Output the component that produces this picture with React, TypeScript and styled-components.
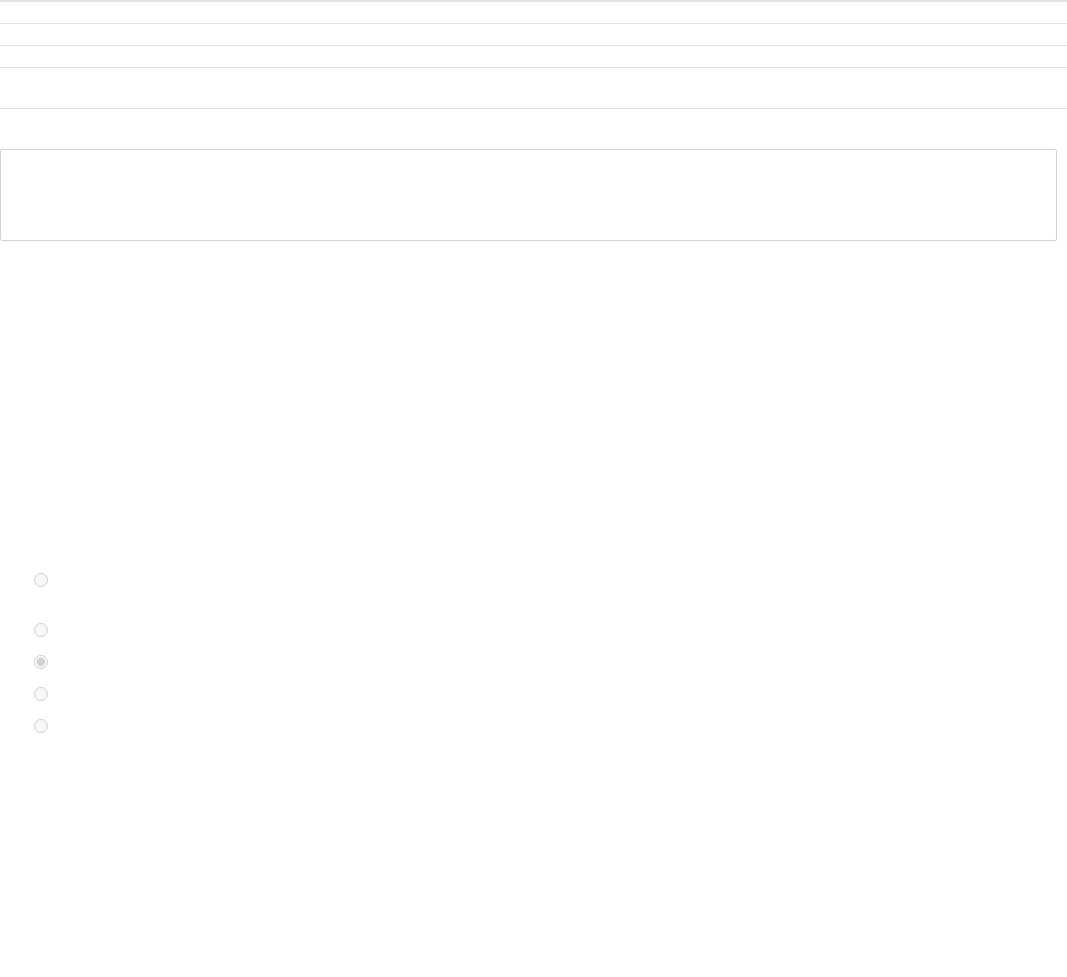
import { createGlobalStyle } from "styled-components";
import styled from "styled-components";

const GlobalStyle = createGlobalStyle`
  html, body {
    margin: 0;
    padding: 0;
    background: #ffffff;
    font-family: "Liberation Sans", Arial, sans-serif;
    font-size: 14px;
    color: #212529;
  }
`;

const Page = styled.div`
  display: flex;
  flex-direction: column;
  min-height: 977px;
`;

const Table = styled.table`
  width: 100%;
  border-collapse: collapse;
  border-top: 2px solid #dee2e6;
`;

const Row = styled.tr<{ tall?: boolean }>`
  height: ${({ tall }) => (tall ? 41 : 22)}px;
  border-bottom: 1px solid #dee2e6;
`;

const Cell = styled.td`
  padding: 0;
`;

const Notes = styled.div`
  margin: 40px 10px 0 0;
  height: 90px;
  border: 1px solid #ced4da;
  border-radius: 2px;
  background: #ffffff;
`;

const OptionList = styled.div`
  display: flex;
  flex-direction: column;
  margin: 332px 0 0 29px;
`;

const Option = styled.label<{ gap: number }>`
  display: flex;
  align-items: flex-start;
  height: ${({ gap }) => gap}px;
`;

const Radio = styled.input`
  width: 14px;
  height: 14px;
  margin: 0 0 0 5px;
`;

const options = [
  { gap: 50, checked: false },
  { gap: 32, checked: false },
  { gap: 32, checked: true },
  { gap: 32, checked: false },
  { gap: 32, checked: false },
];

export default function App() {
  return (
    <>
      <GlobalStyle />
      <Page>
        <Table>
          <tbody>
            <Row>
              <Cell />
            </Row>
            <Row>
              <Cell />
            </Row>
            <Row>
              <Cell />
            </Row>
            <Row tall>
              <Cell />
            </Row>
          </tbody>
        </Table>
        <Notes />
        <OptionList>
          {options.map((o, i) => (
            <Option key={i} gap={o.gap}>
              <Radio type="radio" name="choice" disabled defaultChecked={o.checked} />
            </Option>
          ))}
        </OptionList>
      </Page>
    </>
  );
}
